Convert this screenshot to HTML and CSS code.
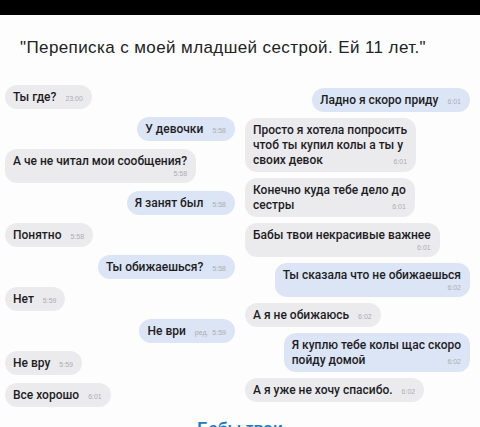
FILE: index.html
```html
<!DOCTYPE html>
<html lang="ru">
<head>
  <meta charset="UTF-8">
  <title>Переписка</title>
  <link rel="stylesheet" href="styles.css">
</head>
<body>
  <div class="topbar"></div>
  <h1 class="caption">"Переписка с моей младшей сестрой. Ей 11 лет."</h1>

  <div class="chat">
    <div class="col left">
      <div class="msg in"><div class="row"><span>Ты где?</span><span class="time">23:00</span></div></div>
      <div class="msg out"><div class="row"><span>У девочки</span><span class="time">5:58</span></div></div>
      <div class="msg in"><div>А че не читал мои сообщения?</div><div class="time under">5:58</div></div>
      <div class="msg out"><div class="row"><span>Я занят был</span><span class="time">5:58</span></div></div>
      <div class="msg in"><div class="row"><span>Понятно</span><span class="time">5:58</span></div></div>
      <div class="msg out"><div class="row"><span>Ты обижаешься?</span><span class="time">5:58</span></div></div>
      <div class="msg in"><div class="row"><span>Нет</span><span class="time">5:59</span></div></div>
      <div class="msg out"><div class="row"><span>Не ври</span><span class="time">ред.&nbsp;&nbsp;5:59</span></div></div>
      <div class="msg in"><div class="row"><span>Не вру</span><span class="time">5:59</span></div></div>
      <div class="msg in"><div class="row"><span>Все хорошо</span><span class="time">6:01</span></div></div>
    </div>

    <div class="col right">
      <div class="msg out"><div class="row"><span>Ладно я скоро приду</span><span class="time">6:01</span></div></div>
      <div class="msg in">
        <div>Просто я хотела попросить</div>
        <div>чтоб ты купил колы а ты у</div>
        <div class="row"><span>своих девок</span><span class="time">6:01</span></div>
      </div>
      <div class="msg in">
        <div>Конечно куда тебе дело до</div>
        <div class="row"><span>сестры</span><span class="time">6:01</span></div>
      </div>
      <div class="msg in"><div>Бабы твои некрасивые важнее</div><div class="time under">6:01</div></div>
      <div class="msg out"><div>Ты сказала что не обижаешься</div><div class="time under">6:02</div></div>
      <div class="msg in"><div class="row"><span>А я не обижаюсь</span><span class="time">6:02</span></div></div>
      <div class="msg out">
        <div>Я куплю тебе колы щас скоро</div>
        <div class="row"><span>пойду домой</span><span class="time">6:02</span></div>
      </div>
      <div class="msg in"><div class="row"><span>А я уже не хочу спасибо.</span><span class="time">6:02</span></div></div>
    </div>
  </div>

  <div class="more">Бабы твои</div>
</body>
</html>
```

FILE: styles.css
```css
body {
  margin: 0;
  background-color: #fdfdfd;
  font-family: "Liberation Sans", Arial, sans-serif;
  color: #1f1f1f;
  overflow: hidden;
}
.topbar {
  height: 15px;
  background-color: #000;
}
.caption {
  margin: 0;
  padding: 23px 0 0 20px;
  font-size: 17px;
  line-height: 20px;
  letter-spacing: 0.4px;
  font-weight: normal;
  color: #222;
}
.chat {
  display: grid;
  grid-template-columns: 230px 225px;
  gap: 10px;
  padding-left: 5px;
  margin-top: 27px;
}
.col {
  display: flex;
  flex-direction: column;
  align-items: flex-start;
}
.col.left {
  gap: 8px;
}
.col.right {
  gap: 6px;
  padding-top: 3px;
}
.msg {
  font-family: Roboto, "Liberation Sans", sans-serif;
  font-weight: 500;
  font-size: 12px;
  line-height: 15px;
  padding: 5px 9px 4px 8px;
  border-radius: 12px;
  color: #1d1d1f;
}
.msg.in {
  background-color: #ebebee;
}
.msg.out {
  background-color: #dce5f5;
  align-self: flex-end;
}
.row {
  display: flex;
  justify-content: space-between;
  align-items: baseline;
}
.time {
  font-family: "Liberation Sans", Arial, sans-serif;
  font-weight: normal;
  font-size: 7px;
  line-height: 10px;
  color: #adadb2;
  margin-left: 9px;
  white-space: nowrap;
}
.time.under {
  text-align: right;
  margin-left: 0;
}
.more {
  margin-top: 13px;
  text-align: center;
  font-size: 16px;
  font-weight: bold;
  color: #1e7bc2;
}
```
